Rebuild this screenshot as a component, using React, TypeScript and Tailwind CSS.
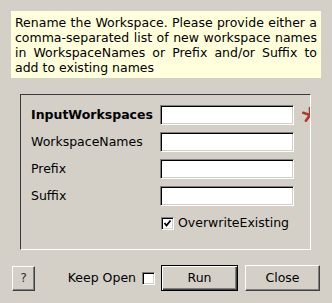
import type { ReactNode } from 'react';

const fieldClass =
  'h-[20px] w-[134px] border border-t-[#808080] border-l-[#808080] border-r-white border-b-white bg-white shadow-[inset_1px_1px_0_#000,inset_-1px_-1px_0_#d4d0c8] outline-none';

const CheckBox = ({ checked }: { checked: boolean }) => (
  <span className="flex h-[13px] w-[13px] shrink-0 items-center justify-center border border-t-[#808080] border-l-[#808080] border-r-white border-b-white bg-white shadow-[inset_1px_1px_0_#000,inset_-1px_-1px_0_#d4d0c8]">
    {checked && (
      <svg width="9" height="9" viewBox="0 0 9 9">
        <path d="M1.5 4 L3.5 6.5 L7.5 1.5" fill="none" stroke="#000" strokeWidth="1.8" />
      </svg>
    )}
  </span>
);

// five-armed red star, half hidden behind the group frame
const RequiredMark = () => (
  <svg width="16" height="16" viewBox="0 0 16 16" className="ml-[8px]">
    <g stroke="#b5362a" strokeWidth="2.6" strokeLinecap="round">
      <path d="M8 8 L8 1" />
      <path d="M8 8 L1.3 5.8" />
      <path d="M8 8 L3.9 13.7" />
      <path d="M8 8 L12.1 13.7" />
      <path d="M8 8 L14.7 5.8" />
    </g>
  </svg>
);

const FieldRow = ({ label, bold, extra }: { label: string; bold?: boolean; extra?: ReactNode }) => (
  <>
    <span className={bold ? 'font-bold' : ''}>{label}</span>
    <input readOnly className={fieldClass} />
    <span className="flex items-center">{extra}</span>
  </>
);

export default function App() {
  return (
    <div className="flex h-[303px] w-[332px] flex-col bg-[#d4d0c8] pt-[11px] font-['DejaVu_Sans','Bitstream_Vera_Sans',sans-serif] text-[12.5px] text-black">
      <div className="ml-[11px] h-[67px] w-[310px] bg-[#ffffdc] px-[4px] pt-[4px] text-justify leading-[15px]">
        Rename the Workspace. Please provide either a comma-separated list of new workspace names in
        WorkspaceNames or Prefix and/or Suffix to add to existing names
      </div>

      <div className="ml-[20px] mt-[16px] h-[156px] w-[291px] overflow-hidden border border-t-[#3a3a3a] border-l-[#3a3a3a] border-r-white border-b-white pl-[10px] pt-[10px]">
        <div className="grid grid-cols-[129px_134px_auto] items-center gap-y-[7px]">
          <FieldRow label="InputWorkspaces" bold extra={<RequiredMark />} />
          <FieldRow label="WorkspaceNames" />
          <FieldRow label="Prefix" />
          <FieldRow label="Suffix" />
          <span />
          <label className="flex h-[20px] items-center pl-[1px]">
            <CheckBox checked />
            <span className="ml-[4px]">OverwriteExisting</span>
          </label>
        </div>
      </div>

      <div className="mt-[15px] flex h-[26px] items-center px-[12px]">
        <button
          type="button"
          className="h-[25px] w-[23px] border border-t-white border-l-white border-r-[#404040] border-b-[#404040] text-[#333] shadow-[inset_-1px_-1px_0_#808080]"
        >
          ?
        </button>
        <span className="ml-auto">Keep Open</span>
        <span className="ml-[6px]">
          <CheckBox checked={false} />
        </span>
        <button
          type="button"
          className="ml-[6px] h-[26px] w-[77px] border border-black shadow-[inset_1px_1px_0_#fff,inset_-1px_-1px_0_#404040,inset_-2px_-2px_0_#808080]"
        >
          Run
        </button>
        <button
          type="button"
          className="ml-[7px] h-[26px] w-[75px] border border-t-white border-l-white border-r-[#404040] border-b-[#404040] shadow-[inset_-1px_-1px_0_#808080]"
        >
          Close
        </button>
      </div>
    </div>
  );
}
